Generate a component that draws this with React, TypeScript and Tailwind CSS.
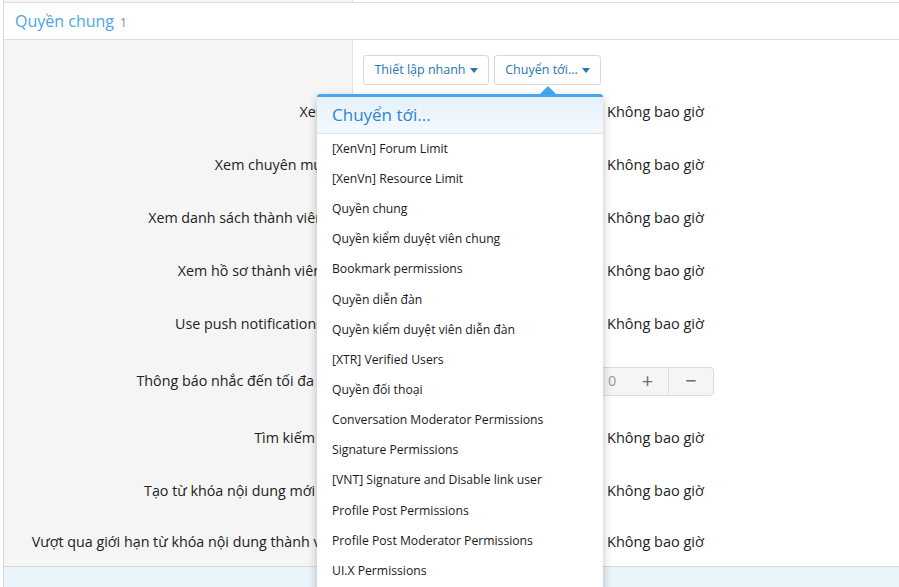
import React from "react";

const labels: { text: string; h: number; pr: string; kind: "radio" | "spin" }[] = [
  { text: "Xem", h: 53, pr: "pr-[23px]", kind: "radio" },
  { text: "Xem chuyên mục", h: 53, pr: "pr-[23px]", kind: "radio" },
  { text: "Xem danh sách thành viên", h: 53, pr: "pr-[28px]", kind: "radio" },
  { text: "Xem hồ sơ thành viên", h: 53, pr: "pr-[30px]", kind: "radio" },
  { text: "Use push notifications", h: 53, pr: "pr-[29px]", kind: "radio" },
  { text: "Thông báo nhắc đến tối đa", h: 61, pr: "pr-[38px]", kind: "spin" },
  { text: "Tìm kiếm", h: 53, pr: "pr-[37px]", kind: "radio" },
  { text: "Tạo từ khóa nội dung mới", h: 53, pr: "pr-[37px]", kind: "radio" },
  { text: "Vượt qua giới hạn từ khóa nội dung thành viên", h: 49, pr: "pr-[11px]", kind: "radio" },
];

const menuItems = [
  "[XenVn] Forum Limit",
  "[XenVn] Resource Limit",
  "Quyền chung",
  "Quyền kiểm duyệt viên chung",
  "Bookmark permissions",
  "Quyền diễn đàn",
  "Quyền kiểm duyệt viên diễn đàn",
  "[XTR] Verified Users",
  "Quyền đối thoại",
  "Conversation Moderator Permissions",
  "Signature Permissions",
  "[VNT] Signature and Disable link user",
  "Profile Post Permissions",
  "Profile Post Moderator Permissions",
  "UI.X Permissions",
];

function Caret() {
  return (
    <span className="inline-block w-0 h-0 border-l-[4px] border-r-[4px] border-t-[5px] border-l-transparent border-r-transparent border-t-[#2577b1] ml-[4px] mb-[1px]" />
  );
}

export default function App() {
  return (
    <div
      className="relative w-[899px] h-[587px] overflow-hidden bg-white text-[#222]"
      style={{ fontFamily: '"Open Sans", "Noto Sans", sans-serif' }}
    >
      <div className="ml-[3px] h-full border-l border-[#d8d8d8] flex flex-col">
        {/* top strip */}
        <div className="flex h-[3px] border-b border-[#dedede] shrink-0">
          <div className="w-[349px] bg-[#f5f5f5] border-r border-[#e3e3e3]" />
          <div className="flex-1" />
        </div>
        {/* section header */}
        <div className="h-[37px] shrink-0 border-b border-[#e0e0e0] flex items-center pl-[11px]">
          <span className="text-[16px] text-[#47a7eb] leading-none">Quyền chung</span>
          <span className="text-[12px] text-[#8a8a8a] ml-[6px] mt-[3px] leading-none">1</span>
        </div>
        {/* buttons row */}
        <div className="flex h-[45px] shrink-0">
          <div className="w-[349px] bg-[#f5f5f5] border-r border-[#e3e3e3]" />
          <div className="flex-1 pl-[10px] pt-[15px] flex gap-[5px] items-start">
            <div className="h-[30px] w-[126px] border border-[#d8d8d8] rounded-[3px] flex items-center justify-center pt-[1px] text-[12.5px] text-[#2577b1]">
              Thiết lập nhanh
              <Caret />
            </div>
            <div className="h-[30px] w-[107px] border border-[#d8d8d8] rounded-[3px] flex items-center justify-center pt-[1px] text-[12.5px] text-[#2577b1]">
              Chuyển tới...
              <Caret />
            </div>
          </div>
        </div>
        {/* permission rows */}
        {labels.map((l, i) => (
          <div key={i} className="flex shrink-0" style={{ height: l.h }}>
            <div className={`w-[349px] bg-[#f5f5f5] border-r border-[#e3e3e3] flex items-center justify-end ${l.pr} pt-[1px] text-[14.3px] whitespace-nowrap overflow-hidden`}>
              {l.text}
            </div>
            <div className="flex-1 flex items-center pl-[10px] pt-[1px] text-[14.5px] whitespace-nowrap">
              {l.kind === "radio" ? (
                <>
                  <div className="w-[244px] shrink-0" />
                  <span>Không bao giờ</span>
                </>
              ) : (
                <>
                  <div className="w-[232px] shrink-0" />
                  <div className="flex h-[29px] border border-[#dcdcdc] rounded-[4px] bg-[#f5f5f5] text-[#9a9a9a]">
                    <div className="w-[31px] flex items-center pl-[12px] text-[14.5px]">0</div>
                    <div className="w-[42px] flex items-center justify-center border-r border-[#dcdcdc] text-[20px] text-[#6f6f6f]">+</div>
                    <div className="w-[44px] flex items-center justify-center text-[20px] text-[#6f6f6f]">−</div>
                  </div>
                </>
              )}
            </div>
          </div>
        ))}
        {/* bottom bar */}
        <div className="flex-1 border-t border-[#d8d8d8] bg-[#e9f4fb]" />
      </div>

      {/* arrow */}
      <div className="absolute left-[540px] top-[86px] w-0 h-0 border-l-[8px] border-r-[8px] border-b-[8px] border-l-transparent border-r-transparent border-b-[#47a7eb]" />
      {/* dropdown menu */}
      <div className="absolute left-[317px] top-[94px] w-[286px] h-[520px] bg-white border-t-[3px] border-[#47a7eb] rounded-t-[3px] shadow-[0_4px_10px_rgba(0,0,0,0.25)]">
        <div className="h-[37px] border-b border-[#dde3e8] bg-gradient-to-b from-[#e5f1fc] to-[#f4f9fe] flex items-center pl-[15px] text-[17px] text-[#2b86d0]">
          Chuyển tới...
        </div>
        {menuItems.map((m) => (
          <div key={m} className="h-[30.15px] flex items-center pl-[15px] text-[12.2px] text-[#1a1a1a] whitespace-nowrap">
            {m}
          </div>
        ))}
      </div>
    </div>
  );
}
